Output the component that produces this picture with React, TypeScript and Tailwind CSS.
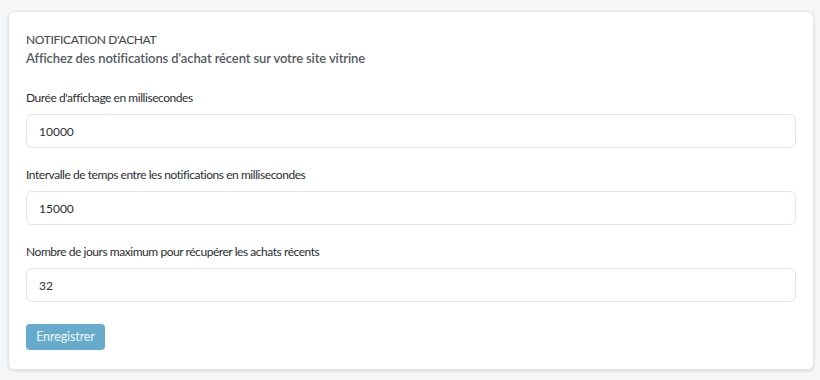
import React from "react";

const fields = [
  { label: "Durée d'affichage en millisecondes", value: "10000" },
  { label: "Intervalle de temps entre les notifications en millisecondes", value: "15000" },
  { label: "Nombre de jours maximum pour récupérer les achats récents", value: "32" },
];

export default function App() {
  return (
    <div
      className="min-h-[380px] w-[820px] bg-[#f5f6f8] pt-[11px] pb-[12px] pl-[8px] pr-[6px]"
      style={{ fontFamily: "Lato, 'Noto Sans', sans-serif" }}
    >
      <div className="rounded-[6px] border border-[#e4e5e7] bg-white px-[17px] pt-[19px] pb-[19px] shadow-[0_1px_3px_rgba(0,0,0,0.12)]">
        <div className="text-[12px] leading-[18px] font-medium tracking-[-0.35px] text-[#4a4f54]">NOTIFICATION D'ACHAT</div>
        <div className="text-[13px] leading-[18px] font-semibold tracking-[-0.12px] text-[#555a5f]">
          Affichez des notifications d'achat récent sur votre site vitrine
        </div>
        <div className="mt-[4px] flex flex-col">
          {fields.map((f) => (
            <div key={f.label}>
              <label className="mt-[18px] mb-[7px] block text-[12px] leading-[18px] tracking-[-0.45px] text-[#2b2f33]">
                {f.label}
              </label>
              <input
                type="text"
                defaultValue={f.value}
                className="block h-[34px] w-full rounded-[6px] border border-[#e2e3e5] bg-white px-[12px] text-[12px] text-[#2b2f33] outline-none"
                style={{ fontFamily: "Lato, 'Noto Sans', sans-serif" }}
              />
            </div>
          ))}
        </div>
        <button
          type="button"
          className="mt-[22px] h-[26px] w-[79px] rounded-[4px] bg-[#66aacc] text-[12.5px] tracking-[-0.1px] text-[#eef6fa]"
          style={{ fontFamily: "Lato, 'Noto Sans', sans-serif" }}
        >
          Enregistrer
        </button>
      </div>
    </div>
  );
}
